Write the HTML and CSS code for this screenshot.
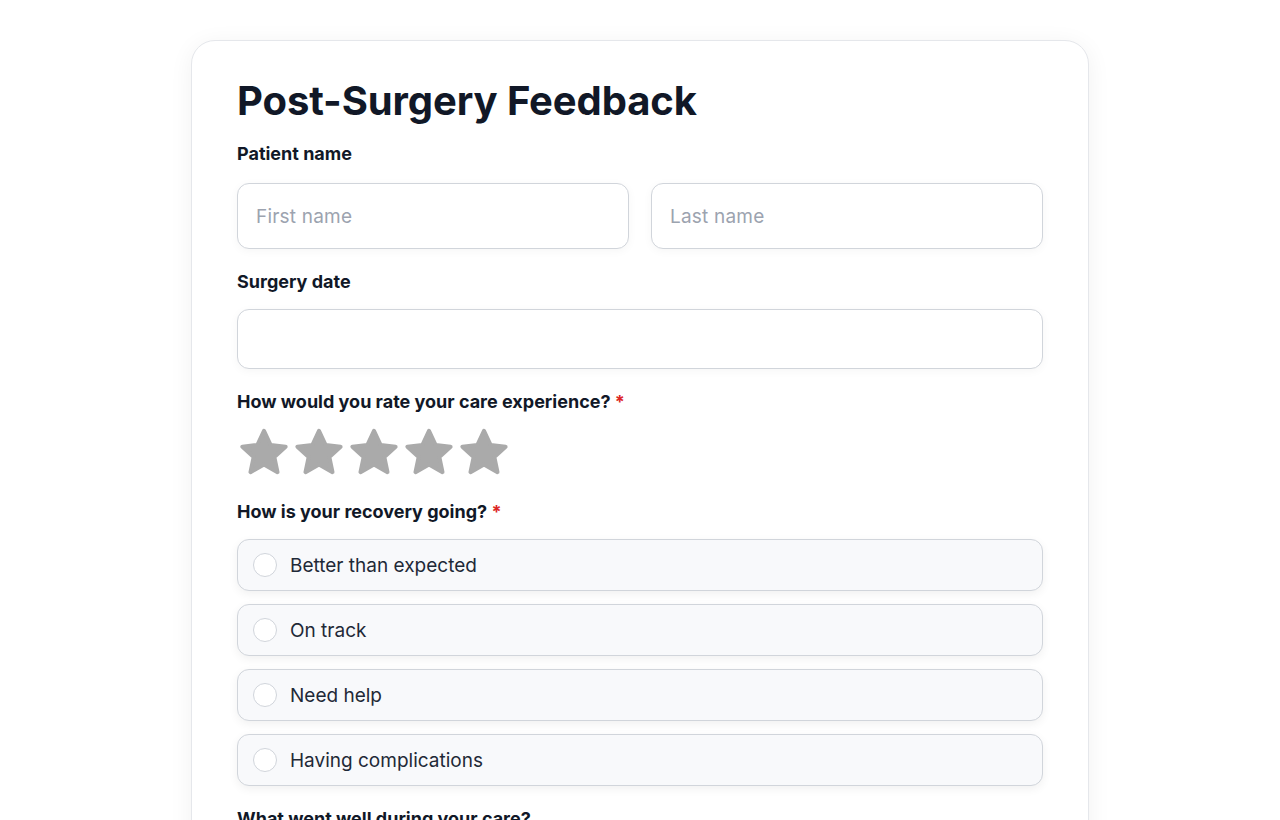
FILE: index.html
```html
<!DOCTYPE html>
<html lang="en">
<head>
  <meta charset="UTF-8" />
  <meta name="viewport" content="width=device-width, initial-scale=1.0"/>
  <title>Post-Surgery Feedback</title>
  <link rel="stylesheet" href="styles.css">
</head>
<body>

  <div class="card">
    <h1 class="title">Post-Surgery Feedback</h1>

    <div class="field">
      <label class="label">Patient name</label>
      <div class="name-row">
        <input class="input tall" type="text" placeholder="First name">
        <input class="input tall" type="text" placeholder="Last name">
      </div>
    </div>

    <div class="field">
      <label class="label">Surgery date</label>
      <input class="input" type="text">
    </div>

    <div class="field rating">
      <label class="label">How would you rate your care experience? <span class="req">*</span></label>
      <div class="stars">
        <svg class="star" viewBox="0 0 24 24"><path d="M12 2.2l2.9 6.2 6.7.8-5 4.6 1.4 6.7L12 17.1l-6 3.4 1.4-6.7-5-4.6 6.7-.8z"/></svg>
        <svg class="star" viewBox="0 0 24 24"><path d="M12 2.2l2.9 6.2 6.7.8-5 4.6 1.4 6.7L12 17.1l-6 3.4 1.4-6.7-5-4.6 6.7-.8z"/></svg>
        <svg class="star" viewBox="0 0 24 24"><path d="M12 2.2l2.9 6.2 6.7.8-5 4.6 1.4 6.7L12 17.1l-6 3.4 1.4-6.7-5-4.6 6.7-.8z"/></svg>
        <svg class="star" viewBox="0 0 24 24"><path d="M12 2.2l2.9 6.2 6.7.8-5 4.6 1.4 6.7L12 17.1l-6 3.4 1.4-6.7-5-4.6 6.7-.8z"/></svg>
        <svg class="star" viewBox="0 0 24 24"><path d="M12 2.2l2.9 6.2 6.7.8-5 4.6 1.4 6.7L12 17.1l-6 3.4 1.4-6.7-5-4.6 6.7-.8z"/></svg>
      </div>
    </div>

    <div class="field">
      <label class="label">How is your recovery going? <span class="req">*</span></label>
      <div class="options">
        <label class="option"><span class="radio"></span>Better than expected</label>
        <label class="option"><span class="radio"></span>On track</label>
        <label class="option"><span class="radio"></span>Need help</label>
        <label class="option"><span class="radio"></span>Having complications</label>
      </div>
    </div>

    <div class="field">
      <label class="label">What went well during your care?</label>
      <textarea class="input area"></textarea>
    </div>
  </div>

</body>
</html>
```

FILE: styles.css
```css
body {
  margin: 0;
  background: #fff;
  color: #111827;
  font-family: Inter, "Liberation Sans", sans-serif;
  padding: 40px 0;
}

.card {
  width: 806px;
  margin: 0 auto;
  padding: 30px 45px 45px;
  border: 1px solid #e5e7eb;
  border-radius: 24px;
  box-shadow: 0 4px 24px rgba(0, 0, 0, 0.06);
  background: #fff;
}

.title {
  font-size: 40px;
  font-weight: 700;
  letter-spacing: -0.1px;
  margin: 0 0 12px;
  line-height: 60px;
  color: #111827;
}

.field {
  margin-bottom: 22px;
}

.label {
  display: block;
  font-size: 18px;
  font-weight: 700;
  margin-bottom: 16px;
  line-height: 22px;
  color: #111827;
}

.req {
  color: #dc2626;
}

.name-row {
  display: flex;
  gap: 22px;
  padding-top: 2px;
}

.input {
  display: block;
  box-sizing: border-box;
  width: 100%;
  height: 60px;
  border: 1px solid #d1d5db;
  border-radius: 12px;
  padding: 0 18px;
  font-family: inherit;
  font-size: 19px;
  letter-spacing: 0.2px;
  color: #111827;
  background: #fff;
  box-shadow: 0 2px 10px rgba(0, 0, 0, 0.04);
  outline: none;
}

.input.tall {
  height: 66px;
}

.input::placeholder {
  color: #9ca3af;
}

.area {
  height: 120px;
}

.rating {
  margin-bottom: 21px;
}

.stars {
  display: flex;
  gap: 1px;
  margin-top: -3px;
}

.star {
  width: 54px;
  height: 54px;
  fill: #aaaaaa;
  stroke: #aaaaaa;
  stroke-width: 1.8;
  stroke-linejoin: round;
}

.options {
  display: flex;
  flex-direction: column;
  gap: 13px;
}

.option {
  display: flex;
  align-items: center;
  height: 52px;
  box-sizing: border-box;
  padding: 0 15px;
  border: 1px solid #d1d5db;
  border-radius: 12px;
  background: #f8f9fb;
  box-shadow: 0 3px 10px rgba(0, 0, 0, 0.06);
  font-size: 19px;
  color: #1f2937;
  cursor: pointer;
}

.radio {
  box-sizing: border-box;
  width: 24px;
  height: 24px;
  border: 1px solid #d1d5db;
  border-radius: 50%;
  background: #fff;
  margin-right: 13px;
}
```
